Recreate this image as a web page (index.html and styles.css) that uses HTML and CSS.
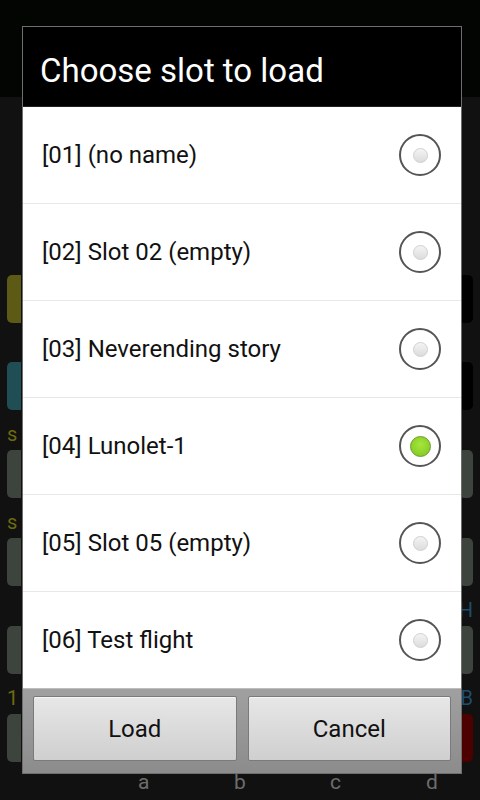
FILE: index.html
```html
<!DOCTYPE html>
<html>
<head>
<meta charset="utf-8">
<link rel="stylesheet" href="styles.css">
</head>
<body>
<div class="screen">
  <div class="app">
    <div class="app-top"></div>
    <div class="app-panel">
      <div class="side left">
        <div class="pad yellow"></div>
        <div class="pad teal"></div>
        <div class="lbl ylw">s</div>
        <div class="pad grey"></div>
        <div class="lbl ylw">s</div>
        <div class="pad grey"></div>
        <div class="lbl"></div>
        <div class="pad grey"></div>
        <div class="lbl ylw">1</div>
        <div class="pad grey"></div>
      </div>
      <div class="side right">
        <div class="pad black"></div>
        <div class="pad black"></div>
        <div class="lbl"></div>
        <div class="pad grey"></div>
        <div class="lbl"></div>
        <div class="pad grey"></div>
        <div class="lbl blu">H</div>
        <div class="pad grey"></div>
        <div class="lbl blu">B</div>
        <div class="pad red"></div>
      </div>
      <div class="keys"><span>a</span><span>b</span><span>c</span><span>d</span></div>
    </div>
  </div>

  <div class="dialog">
    <div class="title">Choose slot to load</div>
    <ul class="list">
      <li class="row"><span>[01] (no name)</span><i class="radio"></i></li>
      <li class="row"><span>[02] Slot 02 (empty)</span><i class="radio"></i></li>
      <li class="row"><span>[03] Neverending story</span><i class="radio"></i></li>
      <li class="row"><span>[04] Lunolet-1</span><i class="radio on"></i></li>
      <li class="row"><span>[05] Slot 05 (empty)</span><i class="radio"></i></li>
      <li class="row"><span>[06] Test flight</span><i class="radio"></i></li>
    </ul>
    <div class="buttons">
      <button class="btn">Load</button>
      <button class="btn">Cancel</button>
    </div>
  </div>
</div>
</body>
</html>
```

FILE: styles.css
```css
* { box-sizing: border-box; }
html, body { margin: 0; padding: 0; }
body {
  width: 480px; height: 800px; overflow: hidden;
  background: #0d0e0d;
  font-family: Roboto, "Noto Sans", sans-serif;
}
.screen { position: relative; width: 480px; height: 800px; overflow: hidden; }

.app { position: absolute; inset: 0; display: flex; flex-direction: column; }
.app-top { height: 97px; background: #030503; }
.app-panel {
  position: relative; flex: 1;
  background: #111111;
}
.side { position: absolute; top: 178px; width: 14px; display: flex; flex-direction: column; }
.side.left { left: 7px; }
.side.right { right: 7px; align-items: flex-end; }
.pad { width: 100%; height: 48px; border-radius: 5px; }
.side.left .pad { border-top-right-radius: 0; border-bottom-right-radius: 0; }
.pad.yellow { background: #5c5a14; }
.pad.teal { background: #1f4e55; margin-top: 39px; }
.pad.grey { background: #3d433d; }
.pad.black { background: #000; }
.pad.black + .pad.black { margin-top: 39px; }
.pad.red { background: #4d0000; }
.lbl { height: 40px; font-size: 20px; line-height: 40px; padding-top: 4px; color: #666; }
.lbl.ylw { color: #6b6a10; }
.lbl.blu { color: #1e4d6b; text-align: right; }
.keys {
  position: absolute; left: 138px; top: 673px; width: 300px;
  display: grid; grid-template-columns: 96px 96px 96px 12px;
  color: #6d6d6d; font-size: 21px;
}

.dialog {
  position: absolute; left: 22px; top: 26px; width: 440px; height: 748px;
  border: 1px solid #6e6e6e;
  background: #000;
  display: flex; flex-direction: column;
}
.title {
  height: 80px; padding-left: 17px;
  color: #fff; font-size: 33px; line-height: 88px;
  border-bottom: 1px solid #222;
  white-space: nowrap;
}
.list { list-style: none; margin: 0; padding: 0; background: #fff; }
.row {
  height: 97px; display: flex; align-items: center; justify-content: space-between;
  padding: 0 20px 0 19px;
  border-bottom: 1px solid #e8e8e8;
  font-size: 24px; color: #111;
}
.row:last-child { border-bottom: none; height: 96px; }
.radio {
  width: 42px; height: 42px; border-radius: 50%;
  border: 2px solid #555;
  display: flex; align-items: center; justify-content: center;
}
.radio::after {
  content: ""; width: 13px; height: 13px; border-radius: 50%;
  background: linear-gradient(#f4f4f4, #dcdcdc);
  border: 1px solid #d0d0d0;
}
.radio.on::after {
  width: 19px; height: 19px;
  background: radial-gradient(circle at 50% 40%, #a6e63c, #7cc51e);
  border: 1px solid #6a9a2a;
}
.buttons {
  flex: 1; display: flex; gap: 11px;
  padding: 7px 10px 12px 10px;
  background: linear-gradient(#a0a0a0, #8c8c8c);
  border-top: 1px solid #bdbdbd;
}
.btn {
  flex: 1; margin: 0;
  font-family: Roboto, "Noto Sans", sans-serif;
  font-size: 24px; color: #111;
  background: linear-gradient(#e8e7e8, #cfcfcf);
  border: 1px solid #7a7a7a;
  border-radius: 2px;
  box-shadow: inset 0 1px 0 #f4f4f4;
}
```
